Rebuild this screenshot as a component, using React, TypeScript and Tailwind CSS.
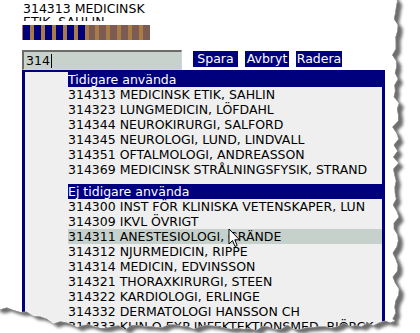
import React from "react";

const used = [
  "314313 MEDICINSK ETIK, SAHLIN",
  "314323 LUNGMEDICIN, LÖFDAHL",
  "314344 NEUROKIRURGI, SALFORD",
  "314345 NEUROLOGI, LUND, LINDVALL",
  "314351 OFTALMOLOGI, ANDREASSON",
  "314369 MEDICINSK STRÅLNINGSFYSIK, STRAND",
];

const notUsed = [
  "314300 INST FÖR KLINISKA VETENSKAPER, LUN",
  "314309 IKVL ÖVRIGT",
  "314311 ANESTESIOLOGI, GRÄNDE",
  "314312 NJURMEDICIN, RIPPE",
  "314314 MEDICIN, EDVINSSON",
  "314321 THORAXKIRURGI, STEEN",
  "314322 KARDIOLOGI, ERLINGE",
  "314332 DERMATOLOGI HANSSON CH",
  "314333 KLIN O EXP INFEKTEKTIONSMED, BJÖRCK",
];

// deterministic jitter for the torn paper edge
function jag(i: number) {
  const v = Math.sin(i * 12.9898 + 78.233) * 43758.5453;
  return v - Math.floor(v);
}

function tornPage() {
  const pts: [number, number][] = [];
  for (let y = -5, i = 0; y < 322; y += 6, i++) {
    pts.push([392 + jag(i) * 7, y]);
  }
  const bottom: [number, number][] = [
    [395, 321], [385, 323], [350, 325], [300, 327], [250, 328], [200, 327],
    [150, 327], [100, 328], [60, 323], [40, 318], [20, 312], [0, 308],
  ];
  let prev = bottom[0];
  pts.push(prev);
  let k = 100;
  for (const p of bottom.slice(1)) {
    const steps = Math.max(1, Math.round(Math.abs(prev[0] - p[0]) / 6));
    for (let s = 1; s <= steps; s++) {
      const t = s / steps;
      const x = prev[0] + (p[0] - prev[0]) * t;
      const y = prev[1] + (p[1] - prev[1]) * t + (jag(k++) - 0.5) * 5;
      pts.push([x, y]);
    }
    prev = p;
  }
  pts.push([-5, 308], [-5, -5]);
  return pts;
}

function TornEdge() {
  const pts = tornPage();
  const page = "M" + pts.map((p) => p[0].toFixed(1) + " " + p[1].toFixed(1)).join(" L") + " Z";
  const shadow = "M" + pts.map((p) => (p[0] + 5).toFixed(1) + " " + (p[1] + 4).toFixed(1)).join(" L") + " Z";
  return (
    <svg className="absolute inset-0 pointer-events-none" width="420" height="333" viewBox="0 0 420 333">
      <defs>
        <clipPath id="outside">
          <path clipRule="evenodd" d={"M-10 -10 H430 V343 H-10 Z " + page} />
        </clipPath>
        <filter id="soft" x="-10%" y="-10%" width="120%" height="120%">
          <feGaussianBlur stdDeviation="1.6" />
        </filter>
      </defs>
      <g clipPath="url(#outside)">
        <rect x="-10" y="-10" width="440" height="353" fill="#ffffff" />
        <path d={shadow} fill="#6e6e6e" filter="url(#soft)" />
        <path d={page} fill="none" stroke="#a0a0a0" strokeWidth="1" />
      </g>
    </svg>
  );
}

function Cursor() {
  return (
    <svg className="absolute left-[228px] top-[228px] pointer-events-none" width="13" height="20" viewBox="0 0 13 20">
      <path d="M1 1 V16 L4.5 12.5 L7 18.5 L9.2 17.5 L6.8 11.8 H11.5 Z" fill="#ffffff" stroke="#000000" strokeWidth="1" strokeLinejoin="miter" />
    </svg>
  );
}

function ProgressBar() {
  const cells = Array.from({ length: 12 }, (_, i) => i);
  return (
    <div className="flex w-[128px] h-[15px] bg-[#a97c47] gap-[4px] pl-[1px]">
      {cells.map((i) => (
        <div key={i} className={i < 6 ? "flex-1 bg-[#00007f]" : "flex-1 bg-[#7c5c52]"} />
      ))}
    </div>
  );
}

function Button({ label, className }: { label: string; className: string }) {
  return (
    <button className={"h-[16px] bg-[#00007f] text-white leading-[16px] text-center whitespace-nowrap " + className}>
      {label}
    </button>
  );
}

export default function App() {
  return (
    <div
      className="relative w-[420px] h-[333px] overflow-hidden bg-white text-[12.5px] text-black"
      style={{ fontFamily: '"DejaVu Sans", Verdana, sans-serif' }}
    >
      <div className="pl-[22px]">
        <div className="h-[21px] overflow-hidden pt-[2px] leading-[13px] pl-[1px]">
          <div>314313 MEDICINSK</div>
          <div>ETIK, SAHLIN</div>
        </div>
        <div className="mt-[4px]">
          <ProgressBar />
        </div>

        <div className="mt-[10px] flex items-start">
          <div className="w-[160px] h-[20px] bg-[#c8d2cd] border-t-[2px] border-l-[2px] border-[#6b6b6b] border-b border-r border-b-[#d4d4d4] border-r-[#d4d4d4] flex items-center pl-[2px] leading-[16px]">
            314<span className="inline-block w-px h-[14px] bg-black ml-[1px]" />
          </div>
          <div className="flex ml-[11px] mt-[1px]">
            <Button label="Spara" className="w-[45px]" />
            <Button label="Avbryt" className="w-[44px] ml-[7px]" />
            <Button label="Radera" className="w-[46px] ml-[7px]" />
          </div>
        </div>

        <div className="w-[363px] border-x-[3px] border-t-[2px] border-[#00007f] bg-[#efefef] pl-[43px] leading-[15px]">
          <div className="h-[15px] bg-[#00007f] text-white">Tidigare använda</div>
          {used.map((t) => (
            <div key={t} className="h-[15px] whitespace-nowrap overflow-hidden">{t}</div>
          ))}
          <div className="h-[7px]" />
          <div className="h-[15px] bg-[#00007f] text-white">Ej tidigare använda</div>
          {notUsed.map((t) => (
            <div
              key={t}
              className={
                t.startsWith("314311")
                  ? "h-[15px] whitespace-nowrap overflow-hidden bg-[#c6d1cc]"
                  : "h-[15px] whitespace-nowrap overflow-hidden"
              }
            >
              {t}
            </div>
          ))}
        </div>
      </div>
      <Cursor />
      <TornEdge />
    </div>
  );
}
